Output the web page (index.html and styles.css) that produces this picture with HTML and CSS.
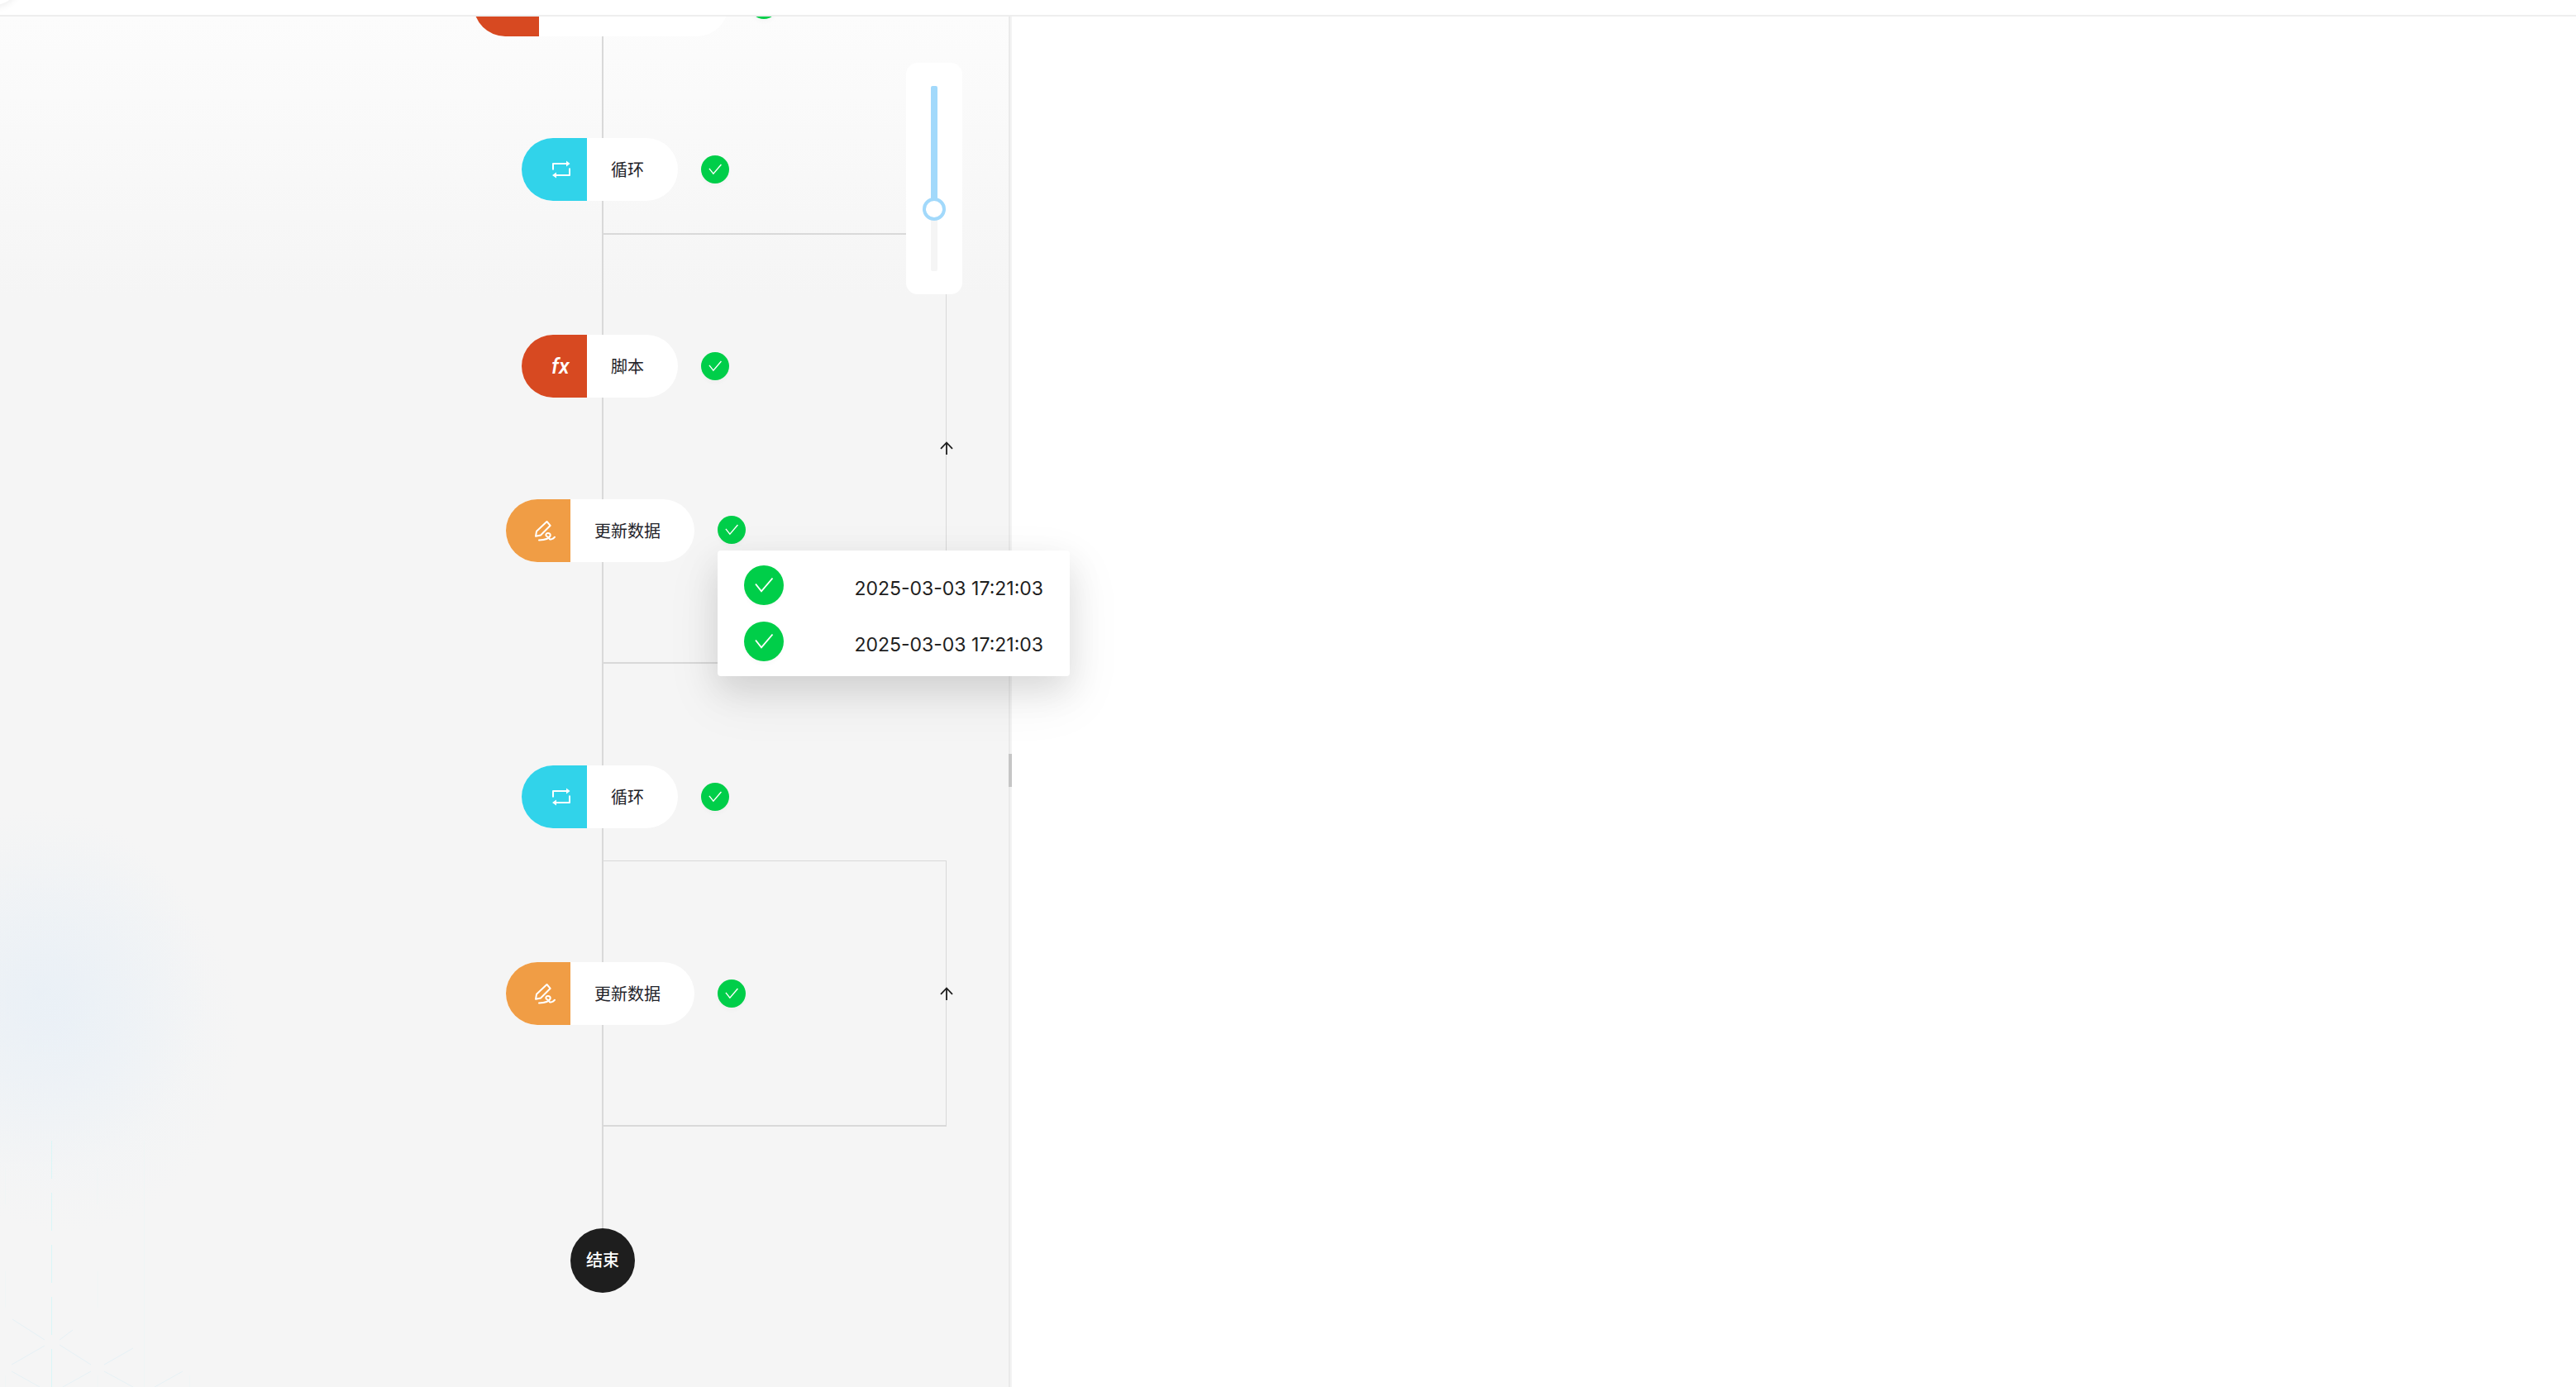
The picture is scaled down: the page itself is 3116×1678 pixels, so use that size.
FILE: index.html
```html
<!DOCTYPE html>
<html lang="zh-CN">
<head>
<meta charset="utf-8">
<meta name="viewport" content="width=device-width, initial-scale=1">
<title>流程日志</title>
<link rel="stylesheet" href="styles.css">
</head>
<body>
<svg class="sprite" aria-hidden="true">
  <symbol id="check" viewBox="0 0 48 48"><path d="M14 22.500l7 8.800L34.500 15.500" fill="none" stroke="#fff" stroke-width="1.900"/></symbol>
  <symbol id="loop" viewBox="0 0 24 24">
    <path d="M2 12.500V5h17M22 10.500V19H5" fill="none" stroke="#fff" stroke-width="2" stroke-linejoin="round"/>
    <path d="M18 1.500l4.500 3.500L18 8.500zM6 15.500L1 19l5 3.500z" fill="#fff"/>
  </symbol>
  <symbol id="edit" viewBox="0 0 26 26" fill="none" stroke="#fff" stroke-width="2" stroke-linecap="round" stroke-linejoin="round">
    <path d="M15.500 2l4.200 4.800L8 18.500l-6 1.300 1-6z"/>
    <path d="M6 24.500c5-.2 12-1.500 13.500-5 .8-2.300-1-3.800-3-3.500-2.500.4-2.800 3-1 4 1.500.9 3 .8 3 2.500 0 2 4.500 1 6.500-1.800"/>
  </symbol>
  <symbol id="arrow" viewBox="0 0 16 16"><path d="M8 16V1.200M1 8.800L8 1.500l7 7.300" fill="none" stroke="#1e1e1e" stroke-width="1.800"/></symbol>
</svg>

<header class="topbar"><span class="topbar-knob"></span></header>

<main class="workspace">
  <section class="canvas" aria-label="流程图">
    <svg class="backdrop" width="240" height="300" viewBox="0 0 240 300" fill="none" aria-hidden="true">
      <path d="M62.500 2v298" stroke="#d9f6f7" stroke-dasharray="46 17"/>
      <path d="M6.500 35v44M6.500 160v44M6.500 286v14M118 35v44M118 160v44M118 286v14M174.500 2v298M229.500 286v14" stroke="#f0f5f5"/>
      <path d="M15 218l39 25M54 250l-40 23M14 281l34 19M72 243l16-12M72 249l38 24M110 281l-34 19M126 273l35-20M126 281l35 19M221 281l-34 19" stroke="#e6f1f5"/>
    </svg>

    <div class="line trunk"></div>
    <div class="line loop-path loop-path-1"></div>
    <div class="line loop-path loop-path-2"></div>
    <svg class="arrow arrow-1"><use href="#arrow"/></svg>
    <svg class="arrow arrow-2"><use href="#arrow"/></svg>

    <button class="node node-0 script" aria-label="节点"><span class="node-icon"></span><span class="node-label"></span></button>
    <span class="status status-0"><svg><use href="#check"/></svg></span>

    <button class="node node-1 loop"><span class="node-icon"><svg class="icon-loop"><use href="#loop"/></svg></span><span class="node-label">循环</span></button>
    <span class="status status-1"><svg><use href="#check"/></svg></span>

    <button class="node node-2 script"><span class="node-icon"><i class="fx">fx</i></span><span class="node-label">脚本</span></button>
    <span class="status status-2"><svg><use href="#check"/></svg></span>

    <button class="node node-3 update"><span class="node-icon"><svg class="icon-edit"><use href="#edit"/></svg></span><span class="node-label">更新数据</span></button>
    <span class="status status-3"><svg><use href="#check"/></svg></span>

    <button class="node node-4 loop"><span class="node-icon"><svg class="icon-loop"><use href="#loop"/></svg></span><span class="node-label">循环</span></button>
    <span class="status status-4"><svg><use href="#check"/></svg></span>

    <button class="node node-5 update"><span class="node-icon"><svg class="icon-edit"><use href="#edit"/></svg></span><span class="node-label">更新数据</span></button>
    <span class="status status-5"><svg><use href="#check"/></svg></span>

    <div class="end">结束</div>

    <div class="zoom-card"><input class="zoom" type="range" min="0" max="100" value="69" aria-label="缩放"></div>
  </section>
  <div class="splitter" role="separator" aria-orientation="vertical"><span class="grip"></span></div>
  <section class="detail" aria-label="详情"></section>

  <ul class="popover">
    <li class="run"><span class="run-status"><svg><use href="#check"/></svg></span><time>2025-03-03 17:21:03</time></li>
    <li class="run"><span class="run-status"><svg><use href="#check"/></svg></span><time>2025-03-03 17:21:03</time></li>
  </ul>
</main>
</body>
</html>
```

FILE: styles.css
```css
* { box-sizing: border-box; }

body {
  margin: 0;
  height: 100vh;
  display: flex;
  flex-direction: column;
  overflow: hidden;
  background: #fff;
  color: #1e1e1e;
  font-family: Inter, "Noto Sans CJK SC", sans-serif;
}

svg { display: block; }
.sprite { position: absolute; width: 0; height: 0; }

.topbar {
  position: relative;
  flex: none;
  height: 20px;
  border-bottom: 2px solid #eee;
  overflow: hidden;
}
.topbar-knob {
  position: absolute;
  left: -34px;
  top: -50px;
  width: 56px;
  height: 56px;
  border-radius: 50%;
  background: #fff;
  box-shadow: 0 2px 10px rgba(0, 0, 0, .08);
}

.workspace { position: relative; flex: 1; min-height: 0; display: flex; }

.canvas {
  position: relative;
  flex: 0 1 1220px;
  overflow: hidden;
  background:
    radial-gradient(ellipse 200px 220px at 50px 1180px, #e4edf688, #e4edf600),
    radial-gradient(ellipse 210px 240px at 80px 1230px, #e9f1f877, #e9f1f800),
    linear-gradient(#fcfcfc, #f5f5f5 340px);
}
.backdrop { position: absolute; left: 0; top: 1358px; }

.splitter {
  flex: 0 0 4px;
  display: flex;
  align-items: center;
  padding-top: 166px;
  border-left: 2px solid #eaeaea;
  background: #f3f3f3;
}
.grip { flex: none; width: 4px; height: 40px; margin-left: -2px; background: #c6c6c6; }
.detail { flex: 1; }

/* connectors */
.line { position: absolute; }
.trunk { left: 728px; top: 0; width: 2px; height: 1466px; background: #d9d9d9; }
.loop-path { left: 730px; width: 415px; border: solid #d9d9d9; border-left: 0; }
.loop-path-1 { top: 262px; height: 521px; border-width: 2px 1px 2px 0; }
.loop-path-2 { top: 1021px; height: 322px; border-width: 1px 1px 2px 0; }
.arrow { position: absolute; left: 1137px; width: 16px; height: 16px; }
.arrow-1 { top: 514px; }
.arrow-2 { top: 1174px; }

/* flow nodes */
.node {
  position: absolute;
  display: flex;
  height: 76px;
  padding: 0;
  border: 0;
  border-radius: 38px;
  overflow: hidden;
  background: #fff;
  color: #1f2329;
  font: 20px/76px "Noto Sans CJK SC", sans-serif;
}
.node-icon { width: 79px; display: flex; align-items: center; padding-left: 36px; }
.node-label { flex: 1; padding-left: 29px; text-align: left; }
.script .node-icon { background: #d74921; }
.loop .node-icon { background: #31d3ea; }
.update .node-icon { width: 78px; background: #f09d45; padding-left: 34px; }
.icon-loop { width: 24px; height: 24px; }
.icon-edit { width: 26px; height: 26px; }
.fx { font: italic 500 26px/26px Roboto, sans-serif; color: #fff; }
.node-0 { left: 573px; top: -52px; width: 308px; }
.node-1 { left: 631px; top: 147px; width: 189px; }
.node-2 { left: 631px; top: 385px; width: 189px; }
.node-3 { left: 612px; top: 584px; width: 228px; }
.node-4 { left: 631px; top: 906px; width: 189px; }
.node-5 { left: 612px; top: 1144px; width: 228px; }

.status, .run-status {
  border-radius: 50%;
  background: #00ce49;
  box-shadow: 0 4px 4px rgba(0, 0, 0, .02);
}
.status { position: absolute; width: 34px; height: 34px; }
.status svg, .run-status svg { width: 100%; height: 100%; }
.status-0 { left: 907px; top: -31px; }
.status-1 { left: 848px; top: 168px; }
.status-2 { left: 848px; top: 406px; }
.status-3 { left: 868px; top: 604px; }
.status-4 { left: 848px; top: 927px; }
.status-5 { left: 868px; top: 1165px; }

.end {
  position: absolute;
  left: 690px;
  top: 1466px;
  width: 78px;
  height: 78px;
  border-radius: 50%;
  background: #1e1e1e;
  color: #fff;
  font: 500 20px/76px "Noto Sans CJK SC", sans-serif;
  text-align: center;
}

/* zoom slider */
.zoom-card {
  position: absolute;
  left: 1096px;
  top: 56px;
  width: 68px;
  padding: 28px 20px;
  border-radius: 14px;
  background: #fff;
}
.zoom {
  display: block;
  appearance: none;
  writing-mode: vertical-lr;
  width: 28px;
  height: 224px;
  margin: 0;
  background: transparent;
}
.zoom::-webkit-slider-runnable-track {
  width: 8px;
  height: 224px;
  border-radius: 2px;
  background: linear-gradient(#a2d9fb 149px, #f5f5f5 149px);
}
.zoom::-webkit-slider-thumb {
  appearance: none;
  width: 28px;
  height: 28px;
  margin-left: -10px;
  border: 4px solid #a2d9fb;
  border-radius: 50%;
  background: #fff;
}

/* run history */
.popover {
  position: absolute;
  left: 868px;
  top: 646px;
  width: 426px;
  margin: 0;
  padding: 18px 32px;
  display: grid;
  gap: 20px;
  list-style: none;
  border-radius: 4px;
  background: #fff;
  box-shadow: 0 24px 64px 8px rgba(0, 0, 0, .06), 0 16px 40px rgba(0, 0, 0, .1);
}
.run {
  display: flex;
  justify-content: space-between;
  height: 48px;
  font-size: 23px;
  line-height: 56px;
}
.run-status { width: 48px; height: 48px; }
```
